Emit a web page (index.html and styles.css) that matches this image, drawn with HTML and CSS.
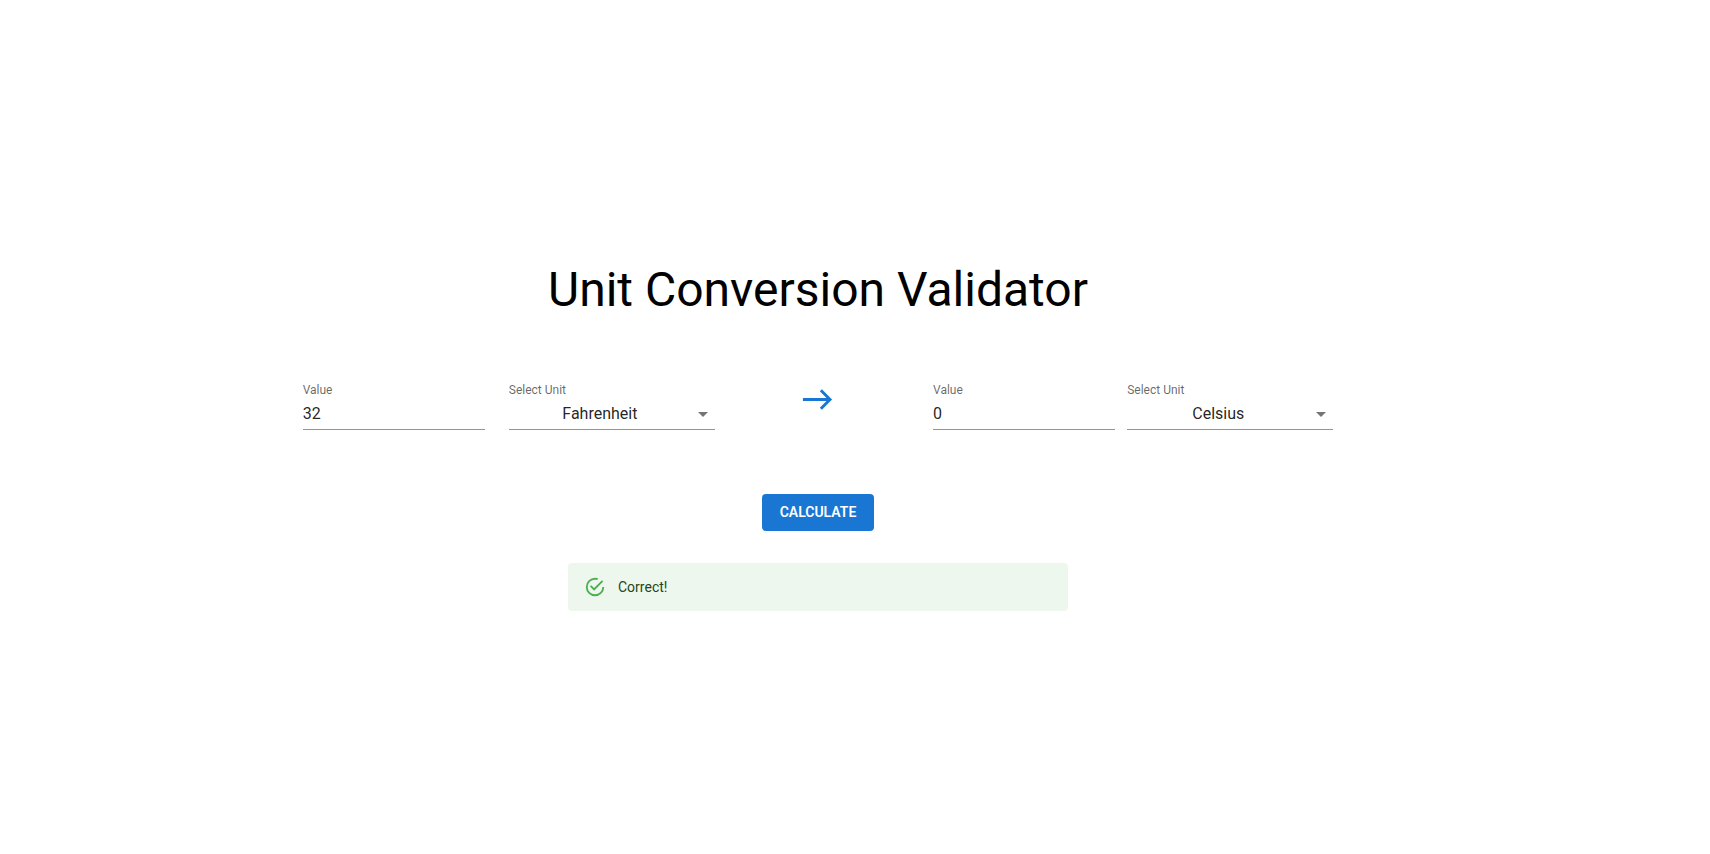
FILE: index.html
```html
<!DOCTYPE html>
<html lang="en">
<head>
  <meta charset="utf-8">
  <meta name="viewport" content="width=device-width, initial-scale=1">
  <title>Unit Conversion Validator</title>
  <link rel="stylesheet" href="styles.css">
</head>
<body>
  <main class="page">
    <h1 class="title">Unit Conversion Validator</h1>
    <form class="converter">
      <div class="fields">
        <div class="field field-start">
          <label class="label" for="from-value">Value</label>
          <input class="control" id="from-value" type="text" inputmode="decimal" value="32">
        </div>
        <div class="field">
          <label class="label" for="from-unit">Select Unit</label>
          <div class="select-wrap">
            <select class="control select" id="from-unit">
              <option selected>Fahrenheit</option>
              <option>Celsius</option>
              <option>Kelvin</option>
              <option>Rankine</option>
            </select>
            <svg class="caret" viewBox="0 0 24 24" aria-hidden="true"><path d="M7 10l5 5 5-5z"/></svg>
          </div>
        </div>
        <svg class="arrow" viewBox="0 0 24 24" aria-hidden="true"><path d="m15 5-1.41 1.41L18.17 11H2v2h16.17l-4.59 4.59L15 19l7-7-7-7z"/></svg>
        <div class="field field-middle">
          <label class="label" for="to-value">Value</label>
          <input class="control" id="to-value" type="text" inputmode="decimal" value="0">
        </div>
        <div class="field">
          <label class="label" for="to-unit">Select Unit</label>
          <div class="select-wrap">
            <select class="control select" id="to-unit">
              <option>Fahrenheit</option>
              <option selected>Celsius</option>
              <option>Kelvin</option>
              <option>Rankine</option>
            </select>
            <svg class="caret" viewBox="0 0 24 24" aria-hidden="true"><path d="M7 10l5 5 5-5z"/></svg>
          </div>
        </div>
      </div>
      <button class="button" type="button">CALCULATE</button>
    </form>
    <div class="alert" role="alert">
      <svg class="alert-icon" viewBox="0 0 24 24" aria-hidden="true"><path d="M20,12A8,8 0 0,1 12,20A8,8 0 0,1 4,12A8,8 0 0,1 12,4C12.76,4 13.5,4.11 14.2,4.31L15.77,2.74C14.61,2.26 13.34,2 12,2A10,10 0 0,0 2,12A10,10 0 0,0 12,22A10,10 0 0,0 22,12M7.91,10.08L6.5,11.5L11,16L21,6L19.59,4.58L11,13.17L7.91,10.08Z"/></svg>
      <span>Correct!</span>
    </div>
  </main>
</body>
</html>
```

FILE: styles.css
```css
* {
  box-sizing: border-box;
}

body {
  margin: 0;
  background: #fff;
  color: #000;
  font-family: Roboto, "Liberation Sans", sans-serif;
}

.page {
  display: flex;
  flex-direction: column;
  align-items: center;
  justify-content: center;
  min-height: 100vh;
  padding: 19px 74px 0 0;
}

.title {
  margin: 0 0 64px;
  font-size: 48px;
  font-weight: 400;
  line-height: 56px;
}

.converter {
  display: flex;
  flex-direction: column;
  align-items: center;
  gap: 64px;
  width: 63%;
}

.fields {
  display: grid;
  grid-template-columns: repeat(5, 1fr);
  width: 100%;
}

.field {
  display: flex;
  flex-direction: column;
  min-width: 0;
}

.field-start {
  padding-right: 24px;
}

.field-middle {
  padding: 0 12px;
}

.label {
  color: rgba(0, 0, 0, 0.6);
  font-size: 12px;
  line-height: 16px;
}

.control {
  display: block;
  width: 100%;
  height: 32px;
  margin: 0;
  padding: 4px 0;
  border: 0;
  border-bottom: 1px solid #949494;
  border-radius: 0;
  outline: 0;
  background: transparent;
  color: rgba(0, 0, 0, 0.87);
  font: inherit;
  font-size: 16px;
  line-height: 23px;
}

.control:focus {
  border-bottom-color: #1976d2;
}

.select-wrap {
  position: relative;
}

.select {
  padding-right: 24px;
  appearance: none;
  cursor: pointer;
  text-align: center;
  text-align-last: center;
}

.caret {
  position: absolute;
  top: 4px;
  right: 0;
  width: 24px;
  height: 24px;
  fill: rgba(0, 0, 0, 0.54);
  pointer-events: none;
}

.arrow {
  justify-self: center;
  width: 35px;
  height: 35px;
  fill: #1976d2;
}

.button {
  min-width: 112px;
  height: 37px;
  padding: 0 16px 2px;
  border: 0;
  border-radius: 4px;
  background: #1976d2;
  color: #fff;
  cursor: pointer;
  font: inherit;
  font-size: 14px;
  font-weight: 600;
  line-height: 24px;
}

.alert {
  display: flex;
  align-items: center;
  gap: 12px;
  width: 500px;
  max-width: 100%;
  min-height: 48px;
  margin-top: 32px;
  padding: 6px 16px;
  border-radius: 4px;
  background: #edf7ed;
  color: #1e4620;
  font-size: 14px;
  line-height: 20px;
}

.alert-icon {
  width: 22px;
  height: 22px;
  fill: #4caf50;
}
```
